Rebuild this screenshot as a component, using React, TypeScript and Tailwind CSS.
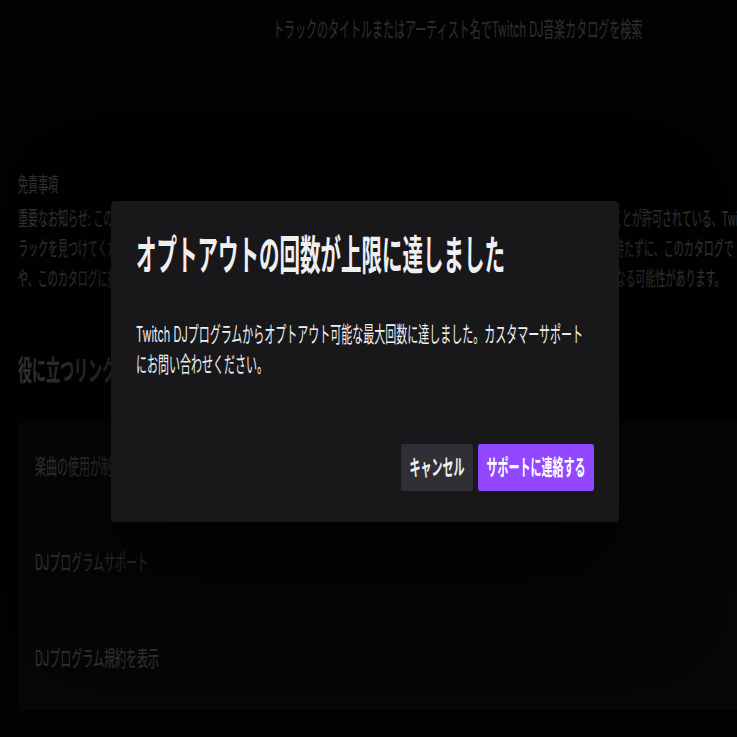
import { Fragment } from 'react';

const disclaimerLines = [
  '重要なお知らせ: このカタログには、Twitch DJプログラムに参加中のクリエイターがライブ配信のDJセットやアーカイブで使用することが許可されている、Twitch DJ向けのトラックのみが含まれています。',
  'ラックを見つけてください。このカタログに掲載されていないトラックは、Twitch DJプログラムのライブ配信中に再生をする権利を持たずに、このカタログで「楽曲の使用が制限されています」と表示される場合があります。',
  'や、このカタログに掲載されているトラックであっても「楽曲の使用が制限されています」と表示されているものは、ミュート対象となる可能性があります。',
];

const links = ['楽曲の使用が制限されているトラックについて', 'DJプログラムサポート', 'DJプログラム規約を表示'];

const OptOutLimitModal = () => {
  return (
    <div className="mr-[14px] mb-[14px] flex w-[1016px] flex-col rounded-md bg-[#18181b] px-[50px] pt-[30px] pb-[31px] shadow-[0_40px_120px_30px_rgba(0,0,0,0.55)]">
      <h2 className="text-[41px] font-bold leading-[48px] text-[#efeff1]">オプトアウトの回数が上限に達しました</h2>
      <p className="mt-[40px] text-[22px] leading-[30px] text-[#efeff1]">
        Twitch DJプログラムからオプトアウト可能な最大回数に達しました。カスタマーサポート
        <br />
        にお問い合わせください。
      </p>
      <div className="mt-[65px] flex justify-end gap-[10px]">
        <button className="h-[47px] rounded-[4px] bg-[#2f2f35] px-[17px] text-[22px] font-bold text-[#efeff1]">キャンセル</button>
        <button className="h-[47px] rounded-[4px] bg-[#9147ff] px-[17px] text-[22px] font-bold text-white">サポートに連絡する</button>
      </div>
    </div>
  );
};

export default function App() {
  return (
    <div className="h-screen w-screen overflow-hidden bg-[#0e0e10]">
      {/* page is laid out wide and squeezed horizontally */}
      <div className="relative h-[737px] w-[1474px] origin-top-left scale-x-50 font-['Inter','Noto_Sans_CJK_JP',sans-serif]">
        <div className="pt-[14px] pl-[546px] text-[22px] leading-[30px] text-[#dedee3]">
          トラックのタイトルまたはアーティスト名でTwitch DJ音楽カタログを検索
        </div>

        <section className="mt-[126px] px-[36px]">
          <h3 className="text-[20px] leading-[30px] text-[#efeff1]">免責事項</h3>
          <p className="mt-[4px] text-[20px] leading-[30px] text-[#efeff1]">
            {disclaimerLines.map((line, i) => (
              <Fragment key={i}>
                <span className="block whitespace-nowrap">{line}</span>
              </Fragment>
            ))}
          </p>

          <h3 className="mt-[57px] text-[28px] font-bold leading-[40px] text-[#efeff1]">役に立つリンク</h3>
          <div className="mt-[31px] w-[1600px] rounded-md bg-[#1f1f23]">
            {links.map((label) => (
              <div key={label} className="flex h-[96px] items-center border-b border-[#2a2a2e] px-[34px] pb-[6px] text-[22px] text-[#efeff1]">
                {label}
              </div>
            ))}
          </div>
        </section>

        <div className="absolute inset-0 flex items-center justify-center bg-black/80">
          <OptOutLimitModal />
        </div>
      </div>
    </div>
  );
}
